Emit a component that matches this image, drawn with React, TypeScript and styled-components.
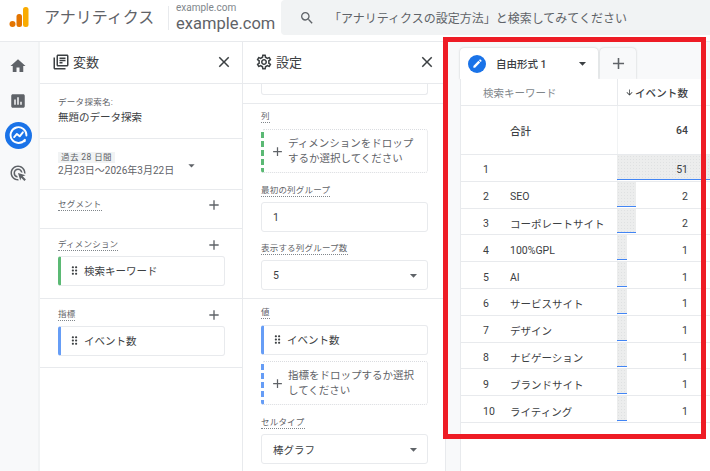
import React from "react"
import styled, { createGlobalStyle } from "styled-components"
import {
  MdAdd,
  MdAdsClick,
  MdArrowDownward,
  MdArrowDropDown,
  MdAssessment,
  MdClose,
  MdDragIndicator,
  MdEdit,
  MdHome,
  MdOutlineLibraryBooks,
  MdOutlineSettings,
  MdSearch,
} from "react-icons/md"

const GlobalStyle = createGlobalStyle`
  html, body {
    margin: 0;
    padding: 0;
    width: 710px;
    height: 471px;
    overflow: hidden;
    background: #fff;
  }
  * {
    box-sizing: border-box;
  }
  body {
    font-family: Roboto, "Noto Sans CJK JP", sans-serif;
    color: #3c4043;
  }
`

const Page = styled.div`
  position: relative;
  width: 710px;
  height: 471px;
  overflow: hidden;
  display: flex;
  flex-direction: column;
`

const Header = styled.header`
  height: 42px;
  flex: none;
  display: flex;
  align-items: flex-start;
  border-bottom: 1px solid #e8eaed;
  background: #fff;
`

const Logo = styled.svg`
  width: 20px;
  height: 22px;
  margin: 6px 0 0 9px;
  flex: none;
`

const Brand = styled.div`
  margin: 5px 0 0 15px;
  width: 124px;
  font-size: 16px;
  line-height: 26px;
  color: #5f6368;
  white-space: nowrap;
`

const Divider = styled.div`
  width: 1px;
  height: 24px;
  margin-top: 6px;
  flex: none;
  background: #e8eaed;
`

const Account = styled.div`
  margin: 2px 0 0 7px;
  width: 105px;
  flex: none;
  color: #5f6368;
  white-space: nowrap;
`

const AccountSmall = styled.div`
  font-size: 10px;
  line-height: 12px;
  color: #80868b;
`

const AccountLarge = styled.div`
  font-size: 16.5px;
  line-height: 20px;
`

const SearchBox = styled.div`
  flex: 1;
  height: 35px;
  display: flex;
  align-items: center;
  padding-left: 18px;
  gap: 14px;
  background: #f1f3f4;
  border-radius: 4px 0 0 4px;
  color: #5f6368;
  font-size: 12px;
  white-space: nowrap;
  svg {
    font-size: 16px;
    flex: none;
  }
`

const Body = styled.div`
  flex: 1;
  display: flex;
  min-height: 0;
`

const Rail = styled.nav`
  width: 40px;
  flex: none;
  display: flex;
  flex-direction: column;
  align-items: center;
  padding: 10px 2px 0 0;
  gap: 8px;
  background: #f8f9fa;
  border-right: 2px solid #f1f3f4;
`

const RailItem = styled.div<{ $active?: boolean }>`
  width: 27px;
  height: 27px;
  border-radius: 50%;
  display: flex;
  align-items: center;
  justify-content: center;
  font-size: 18px;
  color: ${(p) => (p.$active ? "#fff" : "#5f6368")};
  background: ${(p) => (p.$active ? "#1a73e8" : "transparent")};
  &:last-child {
    margin-top: 2px;
  }
`

const Panel = styled.section`
  width: 203px;
  flex: none;
  display: flex;
  flex-direction: column;
  overflow: hidden;
  background: #fff;
  border-right: 1px solid #e8eaed;
`

const PanelHead = styled.div`
  height: 42px;
  flex: none;
  display: flex;
  align-items: center;
  padding: 0 9px 2px 12px;
  gap: 3px;
  font-size: 13px;
  color: #3c4043;
  border-bottom: 1px solid #e8eaed;
  svg {
    font-size: 18px;
    flex: none;
  }
`

const PanelTitle = styled.div`
  flex: 1;
`

const Section = styled.div<{ $h: number; $pt?: number }>`
  height: ${(p) => p.$h}px;
  flex: none;
  padding: ${(p) => p.$pt ?? 9}px 17px 0 18px;
  border-bottom: 1px solid #e8eaed;
`

const SectionHead = styled.div`
  display: flex;
  align-items: center;
  justify-content: space-between;
  height: 14px;
  color: #5f6368;
  svg {
    font-size: 16px;
    margin-right: 3px;
  }
`

const Label = styled.span`
  display: block;
  width: fit-content;
  font-size: 8.5px;
  line-height: 11px;
  color: #5f6368;
  letter-spacing: 0.2px;
  border-bottom: 1px dotted #80868b;
  white-space: nowrap;
`

const NameLabel = styled.div`
  font-size: 8.5px;
  line-height: 12px;
  color: #5f6368;
  letter-spacing: 0.3px;
`

const NameValue = styled.div`
  font-size: 10.5px;
  line-height: 16px;
  margin-top: 2px;
  color: #3c4043;
`

const DateRow = styled.div`
  display: flex;
  align-items: center;
  gap: 10px;
  color: #5f6368;
  svg {
    font-size: 15px;
  }
`

const DateChip = styled.span`
  display: block;
  width: fit-content;
  padding: 0 3px;
  background: #f1f3f4;
  font-size: 8.5px;
  line-height: 11px;
  letter-spacing: 0.4px;
`

const DateText = styled.div`
  font-size: 10px;
  line-height: 14px;
  margin-top: 1px;
  white-space: nowrap;
`

const Chip = styled.div<{ $color: string; $mt?: number }>`
  height: 30px;
  margin-top: ${(p) => p.$mt ?? 4}px;
  display: flex;
  align-items: center;
  gap: 3px;
  padding: 0 0 1px 7px;
  font-size: 10.5px;
  color: #3c4043;
  background: #fff;
  border: 1px solid #e8eaed;
  border-left: 3px solid ${(p) => p.$color};
  border-radius: 3px;
  svg {
    font-size: 13px;
    color: #3c4043;
  }
`

const DropZone = styled.div<{ $color: string }>`
  height: 44px;
  margin-top: 6px;
  display: flex;
  align-items: center;
  gap: 3px;
  padding: 0 8px 0 6px;
  font-size: 10.5px;
  line-height: 15px;
  color: #5f6368;
  border: 1px dotted #dadce0;
  border-left: 3px dashed ${(p) => p.$color};
  border-radius: 3px;
  svg {
    font-size: 15px;
    flex: none;
  }
`

const Field = styled.div`
  height: 30px;
  margin-top: 5px;
  display: flex;
  align-items: center;
  justify-content: space-between;
  padding: 0 5px 0 11px;
  font-size: 10.5px;
  color: #3c4043;
  border: 1px solid #e8eaed;
  border-radius: 3px;
  svg {
    font-size: 17px;
    color: #5f6368;
  }
`

const CutField = styled.div`
  height: 11px;
  border: 1px solid #e8eaed;
  border-top: none;
  border-radius: 0 0 3px 3px;
`

const FieldBlock = styled.div<{ $mt: number }>`
  margin-top: ${(p) => p.$mt}px;
`

const Canvas = styled.main`
  flex: 1;
  display: flex;
  flex-direction: column;
  padding: 6px 0 0 14px;
  background: #f8f9fa;
`

const Tabs = styled.div`
  height: 31px;
  flex: none;
  display: flex;
  gap: 2px;
`

const Tab = styled.div`
  width: 138px;
  display: flex;
  align-items: center;
  padding: 0 7px 0 8px;
  gap: 10px;
  background: #fff;
  border-radius: 4px 4px 0 0;
  box-shadow: 0 0 2px rgba(60, 64, 67, 0.3);
  font-size: 10.5px;
  font-weight: 500;
  color: #3c4043;
  svg {
    font-size: 17px;
  }
`

const TabBadge = styled.span`
  width: 18px;
  height: 18px;
  flex: none;
  border-radius: 50%;
  background: #1a73e8;
  color: #fff;
  display: flex;
  align-items: center;
  justify-content: center;
  svg {
    font-size: 11px;
  }
`

const TabName = styled.span`
  flex: 1;
  white-space: nowrap;
`

const AddTab = styled.div`
  width: 36px;
  display: flex;
  align-items: center;
  justify-content: center;
  background: #f8f9fa;
  border-radius: 4px 4px 0 0;
  box-shadow: 0 0 2px rgba(60, 64, 67, 0.3);
  color: #5f6368;
  font-size: 19px;
`

const Table = styled.div`
  flex: 1;
  background: #fff;
  border-left: 1px solid #e8eaed;
  position: relative;
`

const Row = styled.div<{ $h: number }>`
  height: ${(p) => p.$h}px;
  display: grid;
  grid-template-columns: 156px 93px;
  border-bottom: 1px solid #e8eaed;
  font-size: 10.5px;
  color: #3c4043;
`

const NameCell = styled.div<{ $data?: boolean }>`
  display: flex;
  align-items: center;
  padding-top: ${(p) => (p.$data ? 4 : 0)}px;
  white-space: nowrap;
`

const RowNo = styled.span`
  width: 49px;
  padding-left: 22px;
  flex: none;
`

const HeadText = styled.span`
  padding-left: 22px;
  color: #80868b;
`

const TotalText = styled.span`
  padding-left: 49px;
  font-weight: 500;
`

const ValueCell = styled.div<{ $head?: boolean; $strong?: boolean }>`
  position: relative;
  display: flex;
  align-items: center;
  justify-content: flex-end;
  padding-right: 22px;
  border-left: 1px solid ${(p) => (p.$head ? "#e8eaed" : "#f1f3f4")};
  font-weight: ${(p) => (p.$head || p.$strong ? 500 : 400)};
  letter-spacing: ${(p) => (p.$head ? "0.1px" : "0")};
  white-space: nowrap;
  svg {
    font-size: 9px;
    margin-right: 1px;
  }
`

const Bar = styled.div`
  position: absolute;
  left: -1px;
  top: 0;
  bottom: 1px;
  background-color: #eceded;
  background-image: radial-gradient(#dfe1e2 0.6px, transparent 0.7px);
  background-size: 3px 3px;
  border-bottom: 1.5px solid #4285f4;
`

const BarValue = styled.span`
  position: relative;
  padding-top: 4px;
`

const Highlight = styled.div`
  position: absolute;
  left: 443px;
  top: 37px;
  width: 263px;
  height: 402px;
  border: 5px solid #ee1c25;
  pointer-events: none;
`

const rows: { no: number; name: string; value: number }[] = [
  { no: 1, name: "", value: 51 },
  { no: 2, name: "SEO", value: 2 },
  { no: 3, name: "コーポレートサイト", value: 2 },
  { no: 4, name: "100%GPL", value: 1 },
  { no: 5, name: "AI", value: 1 },
  { no: 6, name: "サービスサイト", value: 1 },
  { no: 7, name: "デザイン", value: 1 },
  { no: 8, name: "ナビゲーション", value: 1 },
  { no: 9, name: "ブランドサイト", value: 1 },
  { no: 10, name: "ライティング", value: 1 },
]

const barWidth = (value: number) => (value > 10 ? "calc(100% + 1px)" : `${value * 9.5}px`)

const ExploreIcon = () => (
  <svg width="19" height="19" viewBox="0 0 24 24" fill="none" stroke="currentColor" strokeWidth="2.4">
    <path d="M20 17.5A10 10 0 1 1 22 12" strokeLinecap="round" />
    <path d="M6.5 14l3.5-4 3.5 3 4-5" strokeLinecap="round" strokeLinejoin="round" />
    <circle cx="19.5" cy="19" r="1.6" fill="currentColor" stroke="none" />
  </svg>
)

const App: React.FC = () => {
  return (
    <Page>
      <GlobalStyle />
      <Header>
        <Logo viewBox="0 0 20 22">
          <rect x="14" y="1" width="5.5" height="20" rx="2.5" fill="#f9ab00" />
          <rect x="7.5" y="8" width="5.5" height="13" rx="2.5" fill="#e37400" />
          <circle cx="3.5" cy="18" r="3" fill="#e37400" />
        </Logo>
        <Brand>アナリティクス</Brand>
        <Divider />
        <Account>
          <AccountSmall>example.com</AccountSmall>
          <AccountLarge>example.com</AccountLarge>
        </Account>
        <SearchBox>
          <MdSearch />
          <span>「アナリティクスの設定方法」と検索してみてください</span>
        </SearchBox>
      </Header>
      <Body>
        <Rail>
          <RailItem>
            <MdHome />
          </RailItem>
          <RailItem>
            <MdAssessment />
          </RailItem>
          <RailItem $active>
            <ExploreIcon />
          </RailItem>
          <RailItem>
            <MdAdsClick />
          </RailItem>
        </Rail>

        <Panel>
          <PanelHead>
            <MdOutlineLibraryBooks />
            <PanelTitle>変数</PanelTitle>
            <MdClose />
          </PanelHead>
          <Section $h={55} $pt={12}>
            <NameLabel>データ探索名:</NameLabel>
            <NameValue>無題のデータ探索</NameValue>
          </Section>
          <Section $h={51} $pt={13}>
            <DateRow>
              <div>
                <DateChip>過去 28 日間</DateChip>
                <DateText>2月23日〜2026年3月22日</DateText>
              </div>
              <MdArrowDropDown />
            </DateRow>
          </Section>
          <Section $h={39} $pt={8}>
            <SectionHead>
              <Label>セグメント</Label>
              <MdAdd />
            </SectionHead>
          </Section>
          <Section $h={70}>
            <SectionHead>
              <Label>ディメンション</Label>
              <MdAdd />
            </SectionHead>
            <Chip $color="#5bb974">
              <MdDragIndicator />
              検索キーワード
            </Chip>
          </Section>
          <Section $h={69}>
            <SectionHead>
              <Label>指標</Label>
              <MdAdd />
            </SectionHead>
            <Chip $color="#669df6">
              <MdDragIndicator />
              イベント数
            </Chip>
          </Section>
        </Panel>

        <Panel>
          <PanelHead>
            <MdOutlineSettings />
            <PanelTitle>設定</PanelTitle>
            <MdClose />
          </PanelHead>
          <Section $h={20} $pt={0}>
            <CutField />
          </Section>
          <Section $h={195} $pt={7}>
            <Label>列</Label>
            <DropZone $color="#5bb974">
              <MdAdd />
              <span>ディメンションをドロップするか選択してください</span>
            </DropZone>
            <FieldBlock $mt={12}>
              <Label>最初の列グループ</Label>
              <Field>1</Field>
            </FieldBlock>
            <FieldBlock $mt={11}>
              <Label>表示する列グループ数</Label>
              <Field>
                5
                <MdArrowDropDown />
              </Field>
            </FieldBlock>
          </Section>
          <Section $h={180} $pt={8}>
            <Label>値</Label>
            <Chip $color="#669df6" $mt={6}>
              <MdDragIndicator />
              イベント数
            </Chip>
            <DropZone $color="#669df6">
              <MdAdd />
              <span>指標をドロップするか選択してください</span>
            </DropZone>
            <FieldBlock $mt={12}>
              <Label>セルタイプ</Label>
              <Field>
                棒グラフ
                <MdArrowDropDown />
              </Field>
            </FieldBlock>
          </Section>
        </Panel>

        <Canvas>
          <Tabs>
            <Tab>
              <TabBadge>
                <MdEdit />
              </TabBadge>
              <TabName>自由形式 1</TabName>
              <MdArrowDropDown />
            </Tab>
            <AddTab>
              <MdAdd />
            </AddTab>
          </Tabs>
          <Table>
            <Row $h={27}>
              <NameCell>
                <HeadText>検索キーワード</HeadText>
              </NameCell>
              <ValueCell $head>
                <MdArrowDownward />
                イベント数
              </ValueCell>
            </Row>
            <Row $h={49}>
              <NameCell>
                <TotalText>合計</TotalText>
              </NameCell>
              <ValueCell $strong>64</ValueCell>
            </Row>
            {rows.map((r) => (
              <Row $h={26.8} key={r.no}>
                <NameCell $data>
                  <RowNo>{r.no}</RowNo>
                  {r.name}
                </NameCell>
                <ValueCell>
                  <Bar style={{ width: barWidth(r.value) }} />
                  <BarValue>{r.value}</BarValue>
                </ValueCell>
              </Row>
            ))}
          </Table>
        </Canvas>
      </Body>
      <Highlight />
    </Page>
  )
}

export default App
